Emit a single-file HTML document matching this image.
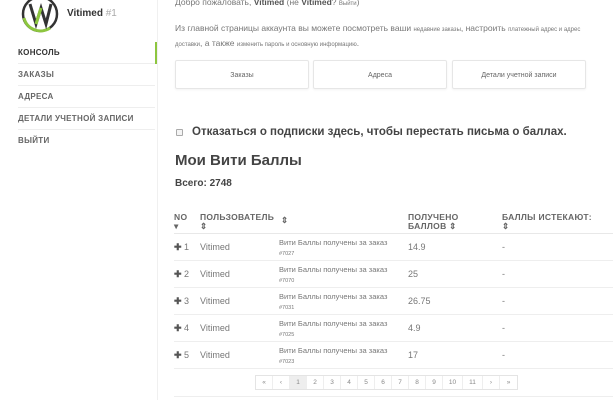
<!DOCTYPE html><html><head><meta charset="utf-8"><style>
*{margin:0;padding:0;box-sizing:border-box}
body{width:613px;height:400px;overflow:hidden;background:#fff;font-family:"Liberation Sans",sans-serif;color:#555;position:relative}
.a{position:absolute}
.nav{left:18px;width:137px;font-size:8px;font-weight:bold;letter-spacing:.3px;color:#666}
.nav div{position:absolute;left:0;width:137px;height:22px;line-height:22px;border-bottom:1px solid #eee}
.btn{top:60px;height:29px;border:1px solid #e6e6e6;border-radius:2px;font-size:7px;color:#666;text-align:center;line-height:29px;box-shadow:0 1px 2px rgba(0,0,0,.05)}
.th{font-size:8.5px;font-weight:bold;color:#666;letter-spacing:.3px;line-height:9px}
.row{left:174px;width:439px;height:27px;border-bottom:1px solid #eee;font-size:9px;color:#777}
.row span{position:absolute;top:8px}
.row .n{color:#777;font-weight:normal}
.row .n b{color:#555}
.pg{top:375px;left:255px;height:15px;border:1px solid #e4e4e4;display:flex;font-size:6.5px;color:#888}
.pg div{width:17px;text-align:center;line-height:13px;border-right:1px solid #eee}
</style></head><body>
<svg class="a" style="left:20px;top:-6px" width="40" height="40" viewBox="0 0 40 40"><circle cx="20" cy="20" r="17" fill="none" stroke="#333" stroke-width="2.5"/><path d="M4 24 A17 17 0 0 0 30 34" fill="none" stroke="#8dc63f" stroke-width="3"/><path d="M10 10 L16 30 L21 14 L26 30 L31 10" fill="none" stroke="#333" stroke-width="3"/><path d="M16 30 L21 14" stroke="#8dc63f" stroke-width="3"/></svg>
<div class="a" style="left:67px;top:8px;font-size:10px;font-weight:bold;color:#333">Vitimed <span style="color:#aaa;font-weight:normal">#1</span></div>
<div class="a" style="left:155px;top:42px;width:2px;height:22px;background:#8dc63f"></div>
<div class="a" style="left:157px;top:0;width:1px;height:400px;background:#f0f0f0"></div>
<div class="a nav" style="top:42px">
<div style="top:0;color:#333">КОНСОЛЬ</div><div style="top:22px">ЗАКАЗЫ</div><div style="top:44px">АДРЕСА</div><div style="top:66px">ДЕТАЛИ УЧЕТНОЙ ЗАПИСИ</div><div style="top:88px;border:none">ВЫЙТИ</div></div>
<div class="a" style="left:175px;top:-3px;font-size:8.5px;color:#777">Добро пожаловать, <b style="color:#555">Vitimed</b> (не <b style="color:#555">Vitimed</b>? <span style="font-size:6px">Выйти</span>)</div>
<div class="a" style="left:175px;top:22px;width:440px;font-size:8.5px;color:#777;line-height:13px;white-space:nowrap">Из главной страницы аккаунта вы можете посмотреть ваши <span style="font-size:6px">недавние заказы</span>, настроить <span style="font-size:6px">платежный адрес и адрес</span><br><span style="font-size:6px">доставки</span>, а также <span style="font-size:6px">изменить пароль и основную информацию</span>.</div>
<div class="a btn" style="left:175px;width:134px">Заказы</div>
<div class="a btn" style="left:313px;width:134px">Адреса</div>
<div class="a btn" style="left:452px;width:134px">Детали учетной записи</div>
<div class="a" style="left:176px;top:129px;width:7px;height:7px;border:1px solid #aaa;border-radius:1px;background:#f4f4f4"></div>
<div class="a" style="left:192px;top:126px;font-size:11.5px;font-weight:bold;color:#444">Отказаться о подписки здесь, чтобы перестать письма о баллах.</div>
<div class="a" style="left:175px;top:152px;font-size:15px;font-weight:bold;color:#444">Мои Вити Баллы</div>
<div class="a" style="left:175px;top:178px;font-size:10px;font-weight:bold;color:#444">Всего: 2748</div>
<div class="a th" style="left:174px;top:213px">NO<br>▾</div>
<div class="a th" style="left:200px;top:213px">ПОЛЬЗОВАТЕЛЬ<br>⇕</div>
<div class="a th" style="left:281px;top:216px">⇕</div>
<div class="a th" style="left:408px;top:213px">ПОЛУЧЕНО<br>БАЛЛОВ ⇕</div>
<div class="a th" style="left:502px;top:213px">БАЛЛЫ ИСТЕКАЮТ:<br>⇕</div>
<div class="a" style="left:174px;top:233px;width:439px;height:1px;background:#e8e8e8"></div>
<div class="a row" style="top:234px"><span class="n" style="left:0"><b>✚</b> 1</span><span style="left:26px">Vitimed</span><span style="left:105px;top:4px;font-size:7.5px;line-height:10px">Вити Баллы получены за заказ<br><small style="font-size:5.5px">#7027</small></span><span style="left:234px">14.9</span><span style="left:328px">-</span></div>
<div class="a row" style="top:261px"><span class="n" style="left:0"><b>✚</b> 2</span><span style="left:26px">Vitimed</span><span style="left:105px;top:4px;font-size:7.5px;line-height:10px">Вити Баллы получены за заказ<br><small style="font-size:5.5px">#7070</small></span><span style="left:234px">25</span><span style="left:328px">-</span></div>
<div class="a row" style="top:288px"><span class="n" style="left:0"><b>✚</b> 3</span><span style="left:26px">Vitimed</span><span style="left:105px;top:4px;font-size:7.5px;line-height:10px">Вити Баллы получены за заказ<br><small style="font-size:5.5px">#7031</small></span><span style="left:234px">26.75</span><span style="left:328px">-</span></div>
<div class="a row" style="top:315px"><span class="n" style="left:0"><b>✚</b> 4</span><span style="left:26px">Vitimed</span><span style="left:105px;top:4px;font-size:7.5px;line-height:10px">Вити Баллы получены за заказ<br><small style="font-size:5.5px">#7025</small></span><span style="left:234px">4.9</span><span style="left:328px">-</span></div>
<div class="a row" style="top:342px"><span class="n" style="left:0"><b>✚</b> 5</span><span style="left:26px">Vitimed</span><span style="left:105px;top:4px;font-size:7.5px;line-height:10px">Вити Баллы получены за заказ<br><small style="font-size:5.5px">#7023</small></span><span style="left:234px">17</span><span style="left:328px">-</span></div>
<div class="a pg"><div>«</div><div>‹</div><div style="background:#eee">1</div><div>2</div><div>3</div><div>4</div><div>5</div><div>6</div><div>7</div><div>8</div><div>9</div><div style="width:20px">10</div><div style="width:20px">11</div><div>›</div><div style="border:none">»</div></div>
<div class="a" style="left:174px;top:396px;width:439px;height:1px;background:#eee"></div>
</body></html>
